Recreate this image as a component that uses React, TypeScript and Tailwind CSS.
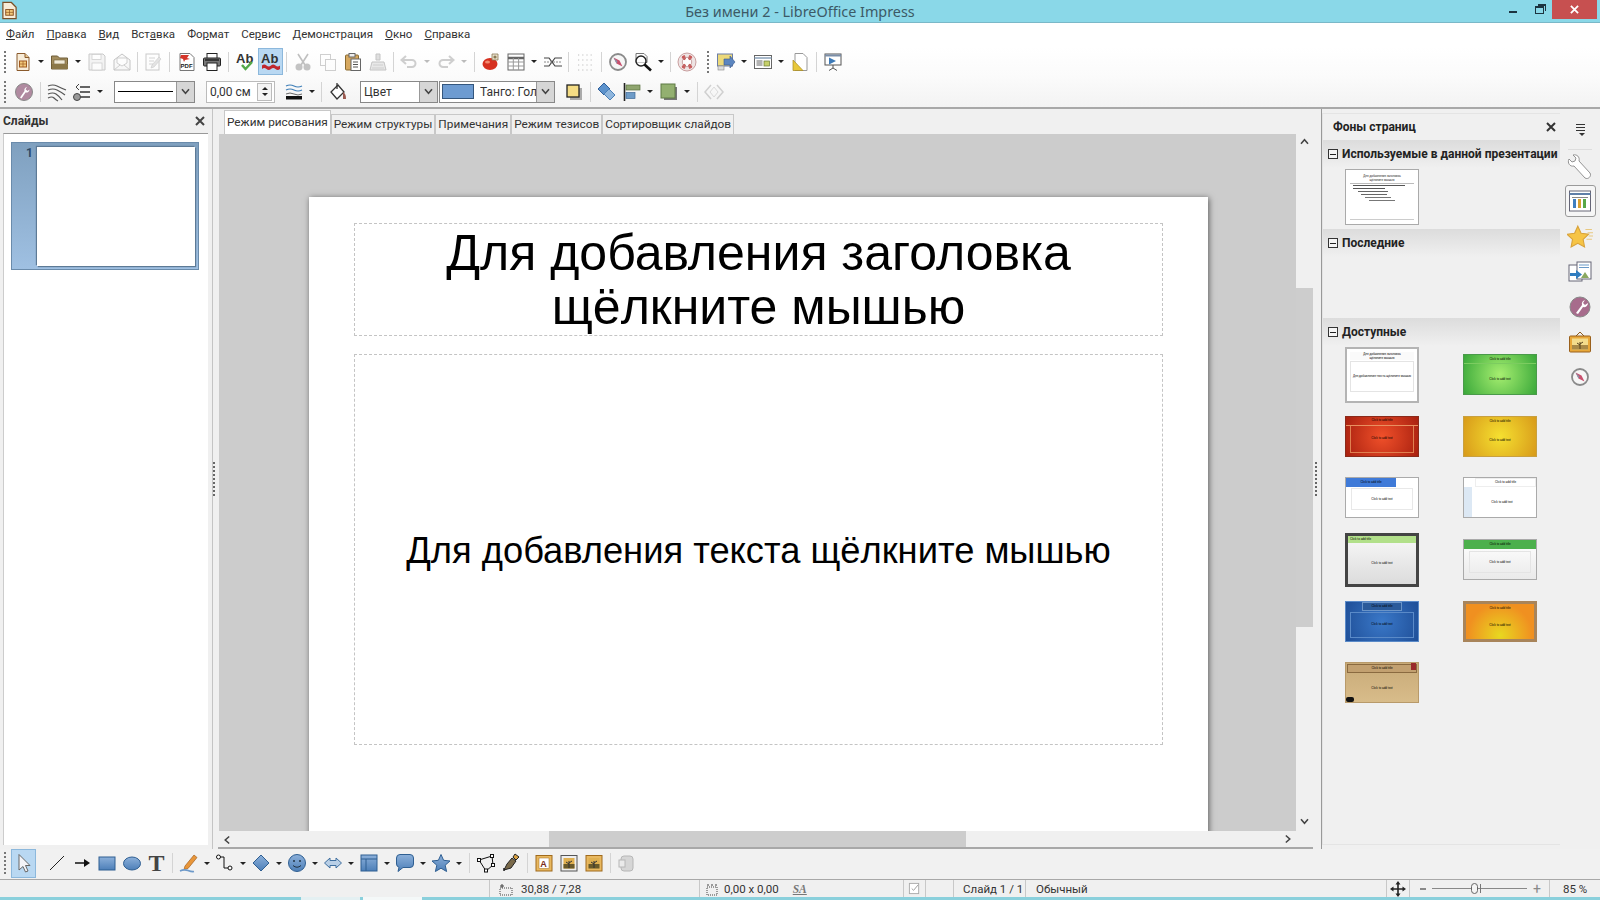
import type { ReactNode } from "react";
import clsx from "clsx";

const S = ({ children, off }: { children: ReactNode; off?: boolean }) => (
  <svg viewBox="0 0 20 20" className={clsx("w-5 h-5", off && "opacity-30")}>
    {children}
  </svg>
);

const Tool = ({ children, active, tall }: { children: ReactNode; active?: boolean; tall?: boolean }) => (
  <div
    className={clsx(
      "w-[25px] shrink-0 flex items-center justify-center",
      tall ? "h-[29px]" : "h-[27px]",
      active && "bg-[#b9d8f2] border border-[#8cb8dc]"
    )}
  >
    {children}
  </div>
);

const Drop = () => (
  <div className="w-[12px] shrink-0 flex items-center justify-center">
    <div className="w-0 h-0 border-x-[3px] border-x-transparent border-t-[3px] border-t-[#222]" />
  </div>
);

const DropOff = () => (
  <div className="w-[12px] shrink-0 flex items-center justify-center">
    <div className="w-0 h-0 border-x-[3px] border-x-transparent border-t-[3px] border-t-[#bbb]" />
  </div>
);

const Sep = ({ className = "w-[8px]" }: { className?: string }) => (
  <div className={clsx("shrink-0 h-[20px] flex justify-center", className)}>
    <div className="w-px h-full bg-[#d4d4d4]" />
  </div>
);

const Grip = ({ className = "" }: { className?: string }) => (
  <div className={clsx("shrink-0 w-[2px] h-[22px] border-l-2 border-dotted border-[#777]", className)} />
);

const Chevron = () => (
  <svg viewBox="0 0 10 8" className="w-[9px] h-[7px]">
    <path d="M1 1.5 5 6l4-4.5" fill="none" stroke="#444" strokeWidth="1.8" />
  </svg>
);

const SelectButton = () => (
  <div className="w-[18px] self-stretch shrink-0 bg-[#d6d6d6] border-l border-[#999] flex items-center justify-center">
    <Chevron />
  </div>
);

/* toolbar icons */
const DocNew = () => (
  <S>
    <path d="M4 1.5h8l4 4v13H4z" fill="#f7ecd8" stroke="#8a5a2c" />
    <path d="M12 1.5v4h4" fill="#e8c890" stroke="#8a5a2c" />
    <rect x="6.5" y="9" width="7" height="6" fill="#f2c97a" stroke="#a05a20" />
    <path d="M6.5 12h7M10 9v6" stroke="#a05a20" strokeWidth=".7" />
  </S>
);
const Folder = () => (
  <S>
    <path d="M1.5 4h6l2 2h8v11h-16z" fill="#a38d5e" stroke="#6f5d36" />
    <rect x="4" y="8" width="11" height="4" fill="#f0ead8" stroke="#6f5d36" strokeWidth=".6" />
    <rect x="2" y="12" width="16" height="5" fill="#8b7748" />
  </S>
);
const Floppy = () => (
  <S off>
    <path d="M2 2h14l2 2v14H2z" fill="#ddd" stroke="#555" />
    <rect x="5" y="2.5" width="9" height="5" fill="#fff" stroke="#555" strokeWidth=".7" />
    <rect x="5" y="11" width="10" height="7" fill="#fff" stroke="#555" strokeWidth=".7" />
  </S>
);
const Mail = () => (
  <S off>
    <path d="M2 8 10 2l8 6v10H2z" fill="#eee" stroke="#444" />
    <path d="M5 6h10v5l-5 3-5-3zM2 18l6-5M18 18l-6-5" fill="#fff" stroke="#444" strokeWidth=".8" />
  </S>
);
const EditDoc = () => (
  <S off>
    <rect x="3" y="2" width="13" height="16" fill="#fff" stroke="#555" />
    <path d="M6 6h6M6 9h5M6 12h4" stroke="#777" />
    <path d="m9 13 7-8 2 2-7 8-3 1z" fill="#aaa" stroke="#555" strokeWidth=".6" />
  </S>
);
const Pdf = () => (
  <S>
    <path d="M3 1.5h10l4 4v13H3z" fill="#fff" stroke="#777" />
    <path d="M4 3h8l-2 3 3 1-5 1-1 2-1-3-3-1z" fill="#d4352a" />
    <text x="3.6" y="16" fontSize="6" fontWeight="700" fontFamily="Liberation Sans" fill="#222">PDF</text>
  </S>
);
const Printer = () => (
  <S>
    <rect x="5" y="1.5" width="10" height="5" fill="#fff" stroke="#222" />
    <rect x="1.5" y="6" width="17" height="8" rx="1" fill="#777" stroke="#222" />
    <rect x="5" y="11" width="10" height="7.5" fill="#fff" stroke="#222" />
    <path d="M3 8h14" stroke="#222" strokeWidth="1.5" />
  </S>
);
const Spell = ({ auto }: { auto?: boolean }) => (
  <S>
    <text x="0" y="11" fontSize="13" fontWeight="700" fontFamily="Liberation Sans" fill="#333">Ab</text>
    {auto ? (
      <path d="M1 13.5q2.2-2 4.5 0t4.5 0 4.5 0 4.5 0v3.5q-2.2 2-4.5 0t-4.5 0-4.5 0-4.5 0z" fill="#c0272d" />
    ) : (
      <path d="m6 13 3.500 4L16 10" fill="none" stroke="#54a848" strokeWidth="2.5" />
    )}
  </S>
);
const Cut = () => (
  <S off>
    <path d="M5 2l7 11M15 2 8 13" stroke="#333" strokeWidth="1.6" />
    <circle cx="6" cy="15" r="3.5" fill="#444" />
    <circle cx="14" cy="15" r="3.5" fill="#444" />
  </S>
);
const Copy = () => (
  <S off>
    <rect x="2.5" y="2.5" width="10" height="11" fill="#fff" stroke="#666" />
    <rect x="7.5" y="7.5" width="10" height="11" fill="#fff" stroke="#666" />
  </S>
);
const Paste = () => (
  <S>
    <rect x="2.5" y="3" width="13" height="15" rx="1" fill="#d6a860" stroke="#8a6a30" />
    <rect x="6" y="1.5" width="6" height="3.5" fill="#eee" stroke="#666" />
    <rect x="8" y="7" width="9.5" height="11.5" fill="#fff" stroke="#666" />
    <path d="M10 10h5M10 12.5h5M10 15h5" stroke="#555" />
  </S>
);
const Brush = () => (
  <S off>
    <path d="M8 2h4v6H8z" fill="#999" stroke="#444" />
    <path d="M4 10h12l2 8H2z" fill="#bbb" stroke="#444" />
    <path d="M5 13h10M4 16h12" stroke="#666" />
  </S>
);
const Undo = ({ flip }: { flip?: boolean }) => (
  <S off>
    <g transform={flip ? "matrix(-1 0 0 1 20 0)" : undefined}>
      <path d="M3 8h10a3.5 3.5 0 0 1 0 7H8" fill="none" stroke="#666" strokeWidth="2" />
      <path d="M7 4 2.5 8 7 12" fill="none" stroke="#666" strokeWidth="2" />
    </g>
  </S>
);
const GalleryBall = () => (
  <S>
    <ellipse cx="9" cy="12" rx="7.5" ry="6" fill="#d6301f" />
    <ellipse cx="6.5" cy="10" rx="2.5" ry="1.5" fill="#f28a70" />
    <path d="M11 2h6v6h-6z" fill="#e8e0cc" stroke="#8a7a55" strokeWidth=".8" />
    <circle cx="14" cy="5" r="1.6" fill="#8a7a55" />
  </S>
);
const TableIcon = () => (
  <S>
    <rect x="2" y="2" width="16" height="16" fill="#fff" stroke="#666" />
    <path d="M2 6h16" stroke="#666" strokeWidth="2.5" />
    <path d="M2 10h16M2 14h16M7.300 6v12M12.600 6v12" stroke="#999" />
  </S>
);
const Connect = () => (
  <S>
    <path d="M1 6h5l3 4 3-4h7M1 14h5l3-4 3 4h7" fill="none" stroke="#444" strokeWidth="1.2" />
    <path d="M1 10h18" stroke="#888" strokeDasharray="2 1" />
  </S>
);
const Dots = () => (
  <S off>
    <path d="M3 3h14M3 8h14M3 13h14M3 18h14" stroke="#333" strokeWidth="1.2" strokeDasharray="1.2 3" />
  </S>
);
const Compass = () => (
  <S>
    <circle cx="10" cy="10" r="8" fill="#f6f6f6" stroke="#8a8a8a" strokeWidth="1.8" />
    <path d="m5.5 5.5 6 3 3 6-6-3z" fill="#c8506e" />
    <path d="m5.5 5.5 3 6 1-2z" fill="#8a92a8" />
  </S>
);
const Zoom = () => (
  <S>
    <path d="M3 1.5h8l3 3v6H3z" fill="#fff" stroke="#777" />
    <circle cx="8" cy="9" r="5" fill="#fff" fillOpacity=".6" stroke="#222" strokeWidth="1.4" />
    <path d="m11.5 12.5 6.5 6" stroke="#111" strokeWidth="2.6" />
  </S>
);
const Lifebuoy = () => (
  <S>
    <circle cx="10" cy="10" r="7" fill="none" stroke="#eee4e4" strokeWidth="4.5" />
    <path d="M5 5a7 7 0 0 1 2.5-1.400l1 3.300-1.500 1zM15 5a7 7 0 0 0-2.500-1.400l-1 3.300 1.500 1zM5 15a7 7 0 0 0 2.500 1.400l1-3.300-1.500-1zM15 15a7 7 0 0 1-2.500 1.400l-1-3.300 1.500-1z" fill="#c85a5a" stroke="#c85a5a" />
    <circle cx="10" cy="10" r="9" fill="none" stroke="#b88080" strokeWidth=".7" />
    <circle cx="10" cy="10" r="4.7" fill="none" stroke="#b88080" strokeWidth=".7" />
  </S>
);
const SlideAdd = () => (
  <S>
    <rect x="1.5" y="2" width="15" height="12" fill="#ecd97a" stroke="#6b7da8" />
    <path d="M8 7h6V4l5 6-5 6v-3H8z" fill="#5c86c0" stroke="#39598a" strokeWidth=".6" />
    <rect x="2" y="14" width="6" height="4" fill="#ddd" stroke="#888" strokeWidth=".6" />
  </S>
);
const Layout = () => (
  <S>
    <rect x="1.5" y="3.5" width="17" height="13" fill="#fff" stroke="#666" />
    <path d="M1.5 6h17" stroke="#8aa0b8" strokeWidth="1.5" />
    <path d="M3.5 9h6M3.5 11h6M3.5 13h6" stroke="#666" />
    <rect x="11" y="9" width="5.5" height="5" fill="#c6d06a" stroke="#6a7a30" strokeWidth=".7" />
  </S>
);
const DocShape = () => (
  <S>
    <path d="M5 1.5h8l4 4v13H5z" fill="#fff" stroke="#999" />
    <path d="M3 18.5V8l10 10.500z" fill="#e8c83a" stroke="#a88a20" strokeWidth=".7" />
  </S>
);
const Present = () => (
  <S>
    <rect x="2" y="2" width="16" height="11" fill="#fff" stroke="#555" />
    <path d="M2 3.5h16" stroke="#7b8ea8" strokeWidth="2" />
    <path d="M6 5.5 13 9l-7 3.500z" fill="#3d7ab8" />
    <path d="M10 13v3M6 18.5l4-2.500 4 2.500" stroke="#555" fill="none" />
  </S>
);
const Wizard = () => (
  <S>
    <circle cx="10" cy="10" r="8.5" fill="#b08aa0" stroke="#888" />
    <path d="M6 15.5 10.500 9a3 3 0 0 1 2.500-4l-1.500 2.200L13.500 9l2-1.500a3.200 3.200 0 0 1-4 3L7.500 16.500z" fill="#fff" />
  </S>
);
const Wavy = () => (
  <S>
    <path d="M1 4q5-2 9 0t9 4M1 8q5-2 9 0t8 5M1 12q5-2 8 0t6 6M1 16q4-2 6 0t4 3" fill="none" stroke="#555" strokeWidth="1.2" />
  </S>
);
const Tabs = () => (
  <S>
    <path d="M8 5h10M8 10h10M8 15h10" stroke="#333" strokeWidth="1.5" />
    <circle cx="5" cy="15" r="3.5" fill="#999" stroke="#444" />
    <path d="m7 2-3 3 3 3" fill="none" stroke="#444" />
  </S>
);
const LineColor = () => (
  <S>
    <path d="M2 4q4-2 8 0t8 0M2 8q4-2 8 0t8 0" fill="none" stroke="#3f7fb8" strokeWidth="1.2" />
    <path d="M2 12q4-2 8 0t8 0" fill="none" stroke="#666" />
    <rect x="2" y="14" width="16" height="3.5" fill="#111" />
  </S>
);
const Bucket = () => (
  <S>
    <path d="M10 3 3 10l6 7 7-7z" fill="#fff" stroke="#333" strokeWidth="1.3" />
    <path d="M9 1v6" stroke="#333" strokeWidth="1.3" />
    <path d="M15 10c2 1 3 3 3 7h-3z" fill="#9a5a50" />
  </S>
);
const ShadowBox = () => (
  <S>
    <rect x="6" y="6" width="12" height="12" fill="#aaa" />
    <rect x="3" y="3" width="12" height="12" fill="#f4dc84" stroke="#222" strokeWidth="1.3" />
  </S>
);
const Rotate = () => (
  <S>
    <path d="m1 7 6-6 6 6-6 6z" fill="#5c92cc" stroke="#2f5f9a" />
    <path d="m7 12 5-5 6 6-5 5z" fill="#8fb6dd" stroke="#4a80b8" />
  </S>
);
const Align = () => (
  <S>
    <path d="M2.5 1v18" stroke="#222" strokeWidth="1.6" />
    <rect x="4" y="3" width="14" height="5" fill="#8fa56f" stroke="#5a7040" strokeWidth=".7" />
    <rect x="4" y="10.5" width="9" height="6" fill="#6e9cc8" stroke="#3f6a98" strokeWidth=".7" />
  </S>
);
const Arrange = () => (
  <S>
    <rect x="5" y="5" width="13" height="13" fill="#777" />
    <rect x="2" y="2" width="14" height="14" fill="#93b070" stroke="#5f7a45" />
  </S>
);
const Diamonds = () => (
  <S off>
    <path d="m7 3-6 7 6 7M13 3l6 7-6 7" fill="none" stroke="#777" strokeWidth="1.5" />
    <path d="m10 5-4 5 4 5 4-5z" fill="none" stroke="#999" />
  </S>
);
const Cursor = () => (
  <S>
    <path d="M5 1.5V17l4-3.500 2.500 5.500 2.500-1-2.500-5.500H16z" fill="#f4f4f8" stroke="#666" />
  </S>
);
const LineTool = () => (
  <S>
    <path d="m3 17 14-14" stroke="#222" />
  </S>
);
const ArrowTool = () => (
  <S>
    <path d="M3 10h10" stroke="#111" strokeWidth="1.5" />
    <path d="m12 6 6 4-6 4z" fill="#111" />
  </S>
);
const RectTool = () => (
  <S>
    <defs>
      <linearGradient id="blue" x1="0" y1="0" x2="0" y2="1">
        <stop offset="0" stopColor="#8cb0da" />
        <stop offset="1" stopColor="#4d7fb8" />
      </linearGradient>
    </defs>
    <rect x="2" y="4" width="16" height="13" fill="url(#blue)" stroke="#2f5f92" />
  </S>
);
const EllipseTool = () => (
  <S>
    <ellipse cx="10" cy="10.5" rx="8.5" ry="6.5" fill="url(#blue)" stroke="#2f5f92" />
  </S>
);
const TextTool = () => (
  <div className="text-[24px] leading-none font-bold text-[#444] font-['Liberation_Serif',serif]">T</div>
);
const Pen = () => (
  <S>
    <path d="m6 13 9-11 3 2.500-9 11-4 1z" fill="#e8963a" stroke="#a5601c" strokeWidth=".7" />
    <path d="M1 18q4-2 8-.5t6 1" fill="none" stroke="#6d99c9" strokeWidth="1.6" />
  </S>
);
const Connector = () => (
  <S>
    <path d="M4 4h5v11h4" fill="none" stroke="#111" />
    <circle cx="3.5" cy="4" r="2" fill="#fff" stroke="#111" />
    <circle cx="15" cy="15" r="2" fill="#fff" stroke="#111" />
  </S>
);
const Diamond = () => (
  <S>
    <path d="m10 2 8 8-8 8-8-8z" fill="url(#blue)" stroke="#2f5f92" />
  </S>
);
const Smiley = () => (
  <S>
    <circle cx="10" cy="10" r="8.5" fill="url(#blue)" stroke="#2f5f92" />
    <circle cx="7" cy="8" r="1" fill="#234" />
    <circle cx="13" cy="8" r="1" fill="#234" />
    <path d="M6 12.5q4 3.500 8 0" fill="none" stroke="#234" />
  </S>
);
const DoubleArrow = () => (
  <S>
    <path d="M1.5 10 7 5v2.500h6V5l5.500 5-5.500 5v-2.500H7V15z" fill="#b9cfe6" stroke="#3f6f9f" />
  </S>
);
const Flow = () => (
  <S>
    <rect x="2" y="2" width="16" height="16" fill="url(#blue)" stroke="#2f5f92" />
    <path d="M2 6h16M7 6v12" stroke="#2f5f92" />
  </S>
);
const Callout = () => (
  <S>
    <path d="M5 1.5h10a3.500 3.500 0 0 1 3.500 3.500v6a3.500 3.500 0 0 1-3.500 3.500H8l-5 4 1-4.200A3.500 3.500 0 0 1 1.500 11V5A3.500 3.500 0 0 1 5 1.500z" fill="url(#blue)" stroke="#2f5f92" />
  </S>
);
const Star = () => (
  <S>
    <path d="m10 1.5 2.600 5.800 6.400.7-4.800 4.200 1.400 6.300-5.600-3.300-5.600 3.300 1.400-6.300L1 8l6.400-.7z" fill="url(#blue)" stroke="#2f5f92" />
  </S>
);
const Points = () => (
  <S>
    <path d="m3 7 13-4 1 9-7 6z" fill="none" stroke="#111" />
    <rect x="1.5" y="5.5" width="3" height="3" fill="#fff" stroke="#111" />
    <rect x="14.5" y="1.5" width="3" height="3" fill="#fff" stroke="#111" />
    <rect x="15.5" y="10.5" width="3" height="3" fill="#fff" stroke="#111" />
    <rect x="8.5" y="16" width="3" height="3" fill="#fff" stroke="#111" />
  </S>
);
const Glue = () => (
  <S>
    <path d="m3 17 3-6 5-6 4 3-5 7z" fill="#7a6a4a" stroke="#222" />
    <path d="m12 4 2-3 4 3-3 3z" fill="#d8a040" stroke="#222" />
    <path d="M3 18v-3" stroke="#222" strokeWidth="1.5" />
  </S>
);
const FrameText = () => (
  <S>
    <rect x="2" y="2.5" width="16" height="15.5" fill="#e8b860" stroke="#a06a1c" />
    <rect x="5" y="5" width="10" height="10.5" fill="#fff" stroke="#a06a1c" strokeWidth=".5" />
    <text x="6.2" y="13.5" fontSize="9" fontWeight="700" fontFamily="Liberation Sans" fill="#7a2a20">A</text>
  </S>
);
const FramePic = ({ gold }: { gold?: boolean }) => (
  <S>
    <rect x="2" y="2.5" width="16" height="15.5" fill={gold ? "#e8b860" : "#eee"} stroke={gold ? "#a06a1c" : "#555"} />
    <rect x="4.5" y="5" width="11" height="10.5" fill="#e0b050" />
    <path d="M4.5 11h11v4.500h-11z" fill="#6a5a2a" />
    <path d="M10 15V8m0 3-3-2m3 1 3-2" stroke="#333" />
  </S>
);
const Shape3d = () => (
  <S off>
    <rect x="4" y="3" width="12" height="15" rx="3" fill="#999" stroke="#333" />
    <rect x="2" y="7" width="6" height="7" fill="#ddd" stroke="#333" />
  </S>
);
const MoveIcon = () => (
  <S>
    <path d="M10 2 7.500 5.500h1.700v3.700H5.500V7.500L2 10l3.500 2.500v-1.700h3.700v3.700H7.500L10 18l2.500-3.500h-1.700v-3.700h3.700v1.700L18 10l-3.500-2.500v1.700h-3.700V5.500h1.700z" fill="#222" />
  </S>
);

/* right deck icons */
const Wrench = () => (
  <svg viewBox="0 0 28 28" className="w-7 h-7">
    <path d="M3 5l3 3 3-1 1-3-3-3c4-1 7 2 6 6l11 12c2 3-2 7-5 5L8 12C4 13 1 9 3 5z" fill="#fff" stroke="#888" strokeWidth=".9" />
  </svg>
);
const Deck = () => (
  <svg viewBox="0 0 24 24" className="w-6 h-6">
    <rect x="1.5" y="2" width="21" height="20" fill="#fff" stroke="#667" />
    <path d="M1.5 5h21" stroke="#5f7fa8" strokeWidth="2" />
    <path d="M4 8.5h16" stroke="#888" />
    <rect x="5" y="10" width="3" height="9" fill="#3f7fc0" />
    <rect x="10" y="10" width="3" height="9" fill="#d8a030" />
    <rect x="15" y="10" width="3" height="9" fill="#58a848" />
  </svg>
);
const GoldStar = () => (
  <svg viewBox="0 0 24 24" className="w-[26px] h-[26px]">
    <path d="m10 2 3 6.500 7 .9-5.100 4.800 1.300 7-6.200-3.400-6.200 3.400 1.300-7L0 9.400l7-.9z" fill="#f6c445" stroke="#d8a23a" />
    <path d="M17 5h6M19 8h5M20 11h4M18 14h5" stroke="#e8c880" />
  </svg>
);
const Transition = () => (
  <svg viewBox="0 0 24 24" className="w-6 h-6">
    <rect x="1" y="5" width="13" height="16" fill="#fff" stroke="#667" />
    <rect x="9" y="2" width="14" height="17" fill="#fff" stroke="#667" />
    <path d="M11 5h10M11 7.500h10" stroke="#6a9ac8" />
    <path d="M13 18l4-6 4 6z" fill="#8aa860" />
    <path d="M2 13h6v-3l6 4.500L8 19v-3H2z" fill="#2f7cc0" />
  </svg>
);
const PurpleWrench = () => (
  <svg viewBox="0 0 24 24" className="w-6 h-6">
    <circle cx="12" cy="12" r="10" fill="#a76c8c" stroke="#888" />
    <path d="M8 18 14 10a4 4 0 0 1 3-5l-2 3 2 2 3-2a4 4 0 0 1-5 4l-5 7z" fill="#fff" />
  </svg>
);
const FrameBig = () => (
  <svg viewBox="0 0 24 24" className="w-6 h-6">
    <path d="M8 6 12 2l4 4" fill="none" stroke="#8a5a1c" />
    <rect x="1.5" y="6" width="21" height="16" rx="1" fill="#e8a83a" stroke="#9a601c" />
    <rect x="4" y="8.5" width="16" height="11" fill="#f3dc8c" />
    <path d="M4 15h16v4.500H4z" fill="#a88a48" />
    <path d="M12 19v-7m0 3-3-2m3 1 3-2" stroke="#54401c" />
  </svg>
);

/* master page thumbnails */
const ClickLabel = ({ children = "Click to add title", className = "" }: { children?: string; className?: string }) => (
  <span className={clsx("text-[3px] leading-none text-black whitespace-nowrap font-['Liberation_Sans',sans-serif]", className)}>{children}</span>
);

const MasterBlank = () => (
  <div className="w-[74px] h-[56px] bg-white border-2 border-[#b4b4b4] flex flex-col items-center p-[3px] font-['Liberation_Sans',sans-serif]">
    <div className="w-full text-[3px] leading-[4px] text-center text-black bg-[#fafafa]">
      Для добавления заголовка
      <br />
      щёлкните мышью
    </div>
    <div className="mt-[1px] w-full h-[31px] border border-[#e4e4e4] flex items-center justify-center">
      <span className="text-[3px] leading-none text-black">Для добавления текста щёлкните мышью</span>
    </div>
  </div>
);

const MasterUsed = () => (
  <div className="w-[74px] h-[56px] bg-white border border-[#aaa] flex flex-col items-center p-[4px] font-['Liberation_Sans',sans-serif]">
    <div className="text-[3px] leading-[4px] text-center text-[#222]">
      Для добавления заголовка
      <br />
      щёлкните мышью
    </div>
    <div className="w-full flex-1 mt-[1px] border-t border-[#bbb] flex flex-col gap-[2px] pt-[1px] pl-[3px]">
      <div className="h-px w-[52px] bg-[#555]" />
      <div className="h-px w-[32px] bg-[#555]" />
      <div className="h-px w-[30px] ml-[5px] bg-[#666]" />
      <div className="h-px w-[26px] ml-[8px] bg-[#666]" />
      <div className="h-px w-[26px] ml-[12px] bg-[#777]" />
      <div className="h-px w-[26px] ml-[16px] bg-[#777]" />
    </div>
    <div className="h-px w-full bg-[#ccc]" />
  </div>
);

const Master = ({ bg, head, inner, border, title }: { bg: string; head?: string; inner?: string; border?: string; title?: string }) => (
  <div className={clsx("relative w-[74px] h-[41px] flex flex-col border overflow-hidden", bg, border ?? "border-[#aaa]")}>
    <div className={clsx("h-[9px] flex items-center justify-center shrink-0", head)}>
      <ClickLabel className={title} />
    </div>
    <div className={clsx("flex-1 flex items-center justify-center", inner)}>
      <ClickLabel>Click to add text</ClickLabel>
    </div>
  </div>
);

const Section = ({ title, children, className = "" }: { title: string; children?: ReactNode; className?: string }) => (
  <div className={className}>
    <div className="h-[28px] shrink-0 bg-gradient-to-b from-[#dcdcdc] to-[#f0f0f0] flex items-center pl-[5px] gap-[4px]">
      <div className="w-[10px] h-[10px] border border-[#333] bg-[#f4f4f4] flex items-center justify-center shrink-0">
        <div className="w-[6px] h-px bg-[#222]" />
      </div>
      <span className="text-[12px] font-bold text-[#222] whitespace-nowrap">{title}</span>
    </div>
    {children}
  </div>
);

const menu: [string, string, string][] = [
  ["", "Ф", "айл"],
  ["", "П", "равка"],
  ["", "В", "ид"],
  ["Вст", "а", "вка"],
  ["Фо", "р", "мат"],
  ["Се", "р", "вис"],
  ["", "Д", "емонстрация"],
  ["", "О", "кно"],
  ["", "С", "правка"],
];

const tabs = ["Режим рисования", "Режим структуры", "Примечания", "Режим тезисов", "Сортировщик слайдов"];

const StatusCell = ({ className, children }: { className: string; children?: ReactNode }) => (
  <div className={clsx("h-full shrink-0 flex items-center border-r border-[#c8c8c8] whitespace-nowrap", className)}>{children}</div>
);

export default function App() {
  return (
    <div className="w-[1600px] h-[900px] flex flex-col overflow-hidden bg-[#f0f0f0] text-[#222] font-['Roboto','Liberation_Sans',sans-serif]">
      {/* Title bar */}
      <div className="h-[23px] shrink-0 bg-[#8ad8e8] border-b border-[#7ab8c8] grid grid-cols-[1fr_auto_1fr] items-start">
        <div className="pl-[1px] pt-[1px]">
          <svg viewBox="0 0 18 20" className="w-[17px] h-[19px]">
            <path d="M2 1.5h9l5 5v12H2z" fill="#f7ecd8" stroke="#7a5028" strokeWidth="1.3" />
            <rect x="5" y="9" width="8" height="6" fill="#f2c97a" stroke="#8a5020" />
            <path d="M5 12h8M9 9v6" stroke="#8a5020" strokeWidth=".7" />
          </svg>
        </div>
        <div className="text-[14.4px] leading-[23px] text-[#3c5a66] font-['Noto_Sans',sans-serif]">Без имени 2 - LibreOffice Impress</div>
        <div className="flex justify-end pr-[3px]">
          <div className="w-[26px] h-[19px] flex items-center justify-center">
            <div className="w-[8px] h-[2px] mt-[5px] bg-[#1c3440]" />
          </div>
          <div className="w-[26px] h-[19px] flex items-center justify-center">
            <div className="relative w-[9px] h-[8px] border border-t-2 border-[#1c3440] mt-[1px]">
              <div className="absolute -top-[4px] left-[2px] w-[8px] h-[7px] border border-t-2 border-[#1c3440] border-l-0 border-b-0" />
            </div>
          </div>
          <div className="w-[45px] h-[19px] bg-[#c75050] flex items-center justify-center text-white">
            <svg viewBox="0 0 10 10" className="w-[9px] h-[9px]">
              <path d="m1 1 8 8M9 1 1 9" stroke="#fff" strokeWidth="2" />
            </svg>
          </div>
        </div>
      </div>

      {/* Menu bar */}
      <div className="h-[24px] shrink-0 bg-white flex items-center pl-[6px] gap-[12px] text-[11.5px] text-[#333]">
        {menu.map(([a, b, c]) => (
          <span key={b + c}>
            {a}
            <u>{b}</u>
            {c}
          </span>
        ))}
      </div>

      {/* Standard toolbar */}
      <div className="h-[29px] shrink-0 bg-gradient-to-b from-white to-[#fbfbfb] flex items-center pl-[4px]">
        <Grip className="mr-[4px]" />
        <Tool><DocNew /></Tool>
        <Drop />
        <Tool><Folder /></Tool>
        <Drop />
        <Tool><Floppy /></Tool>
        <Tool><Mail /></Tool>
        <Sep className="w-[6px]" />
        <Tool><EditDoc /></Tool>
        <Sep className="w-[9px]" />
        <Tool><Pdf /></Tool>
        <Tool><Printer /></Tool>
        <Sep className="w-[9px]" />
        <Tool><Spell /></Tool>
        <Tool active><Spell auto /></Tool>
        <Sep className="w-[7px]" />
        <Tool><Cut /></Tool>
        <Tool><Copy /></Tool>
        <Tool><Paste /></Tool>
        <Tool><Brush /></Tool>
        <Sep className="w-[6px]" />
        <Tool><Undo /></Tool>
        <DropOff />
        <Tool><Undo flip /></Tool>
        <DropOff />
        <Sep className="w-[8px]" />
        <Tool><GalleryBall /></Tool>
        <Tool><TableIcon /></Tool>
        <Drop />
        <Tool><Connect /></Tool>
        <Sep className="w-[7px]" />
        <Tool><Dots /></Tool>
        <Sep className="w-[8px]" />
        <Tool><Compass /></Tool>
        <Tool><Zoom /></Tool>
        <Drop />
        <Sep className="w-[7px]" />
        <Tool><Lifebuoy /></Tool>
        <Grip className="ml-[8px] mr-[4px]" />
        <Tool><SlideAdd /></Tool>
        <Drop />
        <Tool><Layout /></Tool>
        <Drop />
        <Tool><DocShape /></Tool>
        <Sep className="w-[8px]" />
        <Tool><Present /></Tool>
      </div>

      {/* Line and filling toolbar */}
      <div className="h-[33px] shrink-0 bg-gradient-to-b from-[#fbfbfb] to-[#f3f3f3] border-b-2 border-[#a8a8a8] flex items-center pl-[4px]">
        <Grip className="mr-[5px]" />
        <Tool><Wizard /></Tool>
        <Sep className="w-[8px]" />
        <Tool><Wavy /></Tool>
        <Tool><Tabs /></Tool>
        <Drop />
        <div className="w-[81px] h-[22px] ml-[8px] shrink-0 bg-white border border-[#888] flex items-center">
          <div className="flex-1 mx-[3px] h-px bg-black" />
          <SelectButton />
        </div>
        <div className="w-[69px] h-[22px] ml-[11px] shrink-0 bg-white border border-[#bbb] flex items-center pl-[3px] text-[12px] text-[#333]">
          <span className="flex-1">0,00 см</span>
          <div className="w-[15px] h-[18px] mr-[2px] border border-[#bbb] bg-[#f4f4f4] flex flex-col items-center justify-center gap-[3px]">
            <div className="w-0 h-0 border-x-[3px] border-x-transparent border-b-[3px] border-b-[#222]" />
            <div className="w-0 h-0 border-x-[3px] border-x-transparent border-t-[3px] border-t-[#222]" />
          </div>
        </div>
        <div className="w-[6px] shrink-0" />
        <Tool><LineColor /></Tool>
        <Drop />
        <Sep className="w-[7px]" />
        <Tool><Bucket /></Tool>
        <div className="w-[78px] h-[22px] ml-[10px] shrink-0 bg-white border border-[#888] flex items-center pl-[3px] text-[12px] text-[#333]">
          <span className="flex-1">Цвет</span>
          <SelectButton />
        </div>
        <div className="w-[116px] h-[22px] ml-[1px] shrink-0 bg-white border border-[#888] flex items-center pl-[2px] text-[12px] text-[#333] overflow-hidden">
          <div className="w-[32px] h-[15px] shrink-0 bg-[#6d9bd1] border border-[#34567d]" />
          <span className="ml-[6px] flex-1 overflow-hidden whitespace-nowrap">Танго: Голуб</span>
          <SelectButton />
        </div>
        <div className="w-[6px] shrink-0" />
        <Tool><ShadowBox /></Tool>
        <Sep className="w-[8px]" />
        <Tool><Rotate /></Tool>
        <Tool><Align /></Tool>
        <Drop />
        <Tool><Arrange /></Tool>
        <Drop />
        <Sep className="w-[8px]" />
        <Tool><Diamonds /></Tool>
      </div>

      {/* Work area */}
      <div className="flex-1 min-h-0 flex">
        {/* Slide pane */}
        <div className="w-[212px] shrink-0 flex flex-col pb-[4px] pl-[3px] pr-[4px]">
          <div className="h-[24px] shrink-0 flex items-center justify-between pr-[3px] text-[12px] font-bold text-[#333]">
            <span>Слайды</span>
            <svg viewBox="0 0 10 10" className="w-[10px] h-[10px]">
              <path d="m1 1 8 8M9 1 1 9" stroke="#444" strokeWidth="2" />
            </svg>
          </div>
          <div className="flex-1 bg-white border-t border-[#999] border-l border-l-[#ccc] pt-[8px] pl-[7px]">
            <div className="w-[188px] h-[128px] bg-gradient-to-b from-[#7fa0bf] to-[#9fc0e2] border border-[#6a8bab] flex pl-[25px] pt-[4px] relative">
              <span className="absolute top-[1px] left-[14px] text-[12px] font-bold text-[#2c4a66]">1</span>
              <div className="w-[158px] h-[119px] bg-white shadow-[-1px_-1px_1px_#5d7a96,1px_1px_1px_#5d7a96]" />
            </div>
          </div>
        </div>

        {/* Left sash */}
        <div className="w-[6px] shrink-0 flex items-center border-l border-[#c4c4c4]">
          <div className="w-[2px] h-[34px] border-l-2 border-dotted border-[#666]" />
        </div>

        {/* Document view */}
        <div className="w-[1095px] shrink-0 flex flex-col border-b-2 border-[#a8a8a8] pl-[1px]">
          <div className="h-[25px] shrink-0 flex items-end pl-[5px] text-[11.8px] text-[#333]">
            {tabs.map((t, i) => (
              <div
                key={t}
                className={clsx(
                  "px-[2px] border border-b-0 border-[#c8c8c8] whitespace-nowrap",
                  i === 0 ? "h-[24px] bg-white leading-[22px]" : "h-[20px] bg-[#f0f0f0] leading-[19px]"
                )}
              >
                {t}
              </div>
            ))}
          </div>
          <div className="flex-1 min-h-0 flex">
            <div className="flex-1 min-w-0 flex flex-col">
              <div className="flex-1 min-h-0 bg-[#cccccc] overflow-hidden pl-[90px] pt-[63px]">
                <div className="w-[899px] h-[674px] bg-white shadow-[1px_1px_6px_rgba(0,0,0,0.55)] pt-[26px] px-[45px] font-['Liberation_Sans',sans-serif] text-black">
                  <div className="h-[113px] border border-dashed border-[#c4c4c4] text-center text-[50px] leading-[54px] pt-[2px]">
                    Для добавления заголовка
                    <br />
                    щёлкните мышью
                  </div>
                  <div className="h-[391px] mt-[18px] pt-[3px] border border-dashed border-[#c4c4c4] flex items-center justify-center text-[36.3px]">
                    Для добавления текста щёлкните мышью
                  </div>
                </div>
              </div>
              <div className="h-[16px] shrink-0 flex items-center bg-[#f0f0f0]">
                <div className="w-[16px] flex justify-center rotate-90"><Chevron /></div>
                <div className="flex-1 h-full pl-[314px] pr-[314px]">
                  <div className="h-full bg-[#cdcdcd]" />
                </div>
                <div className="w-[16px] flex justify-center -rotate-90"><Chevron /></div>
              </div>
            </div>
            <div className="w-[17px] shrink-0 flex flex-col items-center bg-[#f0f0f0]">
              <div className="h-[16px] flex items-center rotate-180"><Chevron /></div>
              <div className="flex-1 w-full flex flex-col pt-[138px] pb-[186px]">
                <div className="flex-1 bg-[#cdcdcd]" />
              </div>
              <div className="h-[34px] pb-[18px] flex items-center"><Chevron /></div>
            </div>
          </div>
        </div>

        {/* Right sash */}
        <div className="w-[9px] shrink-0 flex items-center pl-[2px] border-r border-[#999]">
          <div className="w-[2px] h-[34px] border-l-2 border-dotted border-[#666]" />
        </div>

        {/* Master pages panel */}
        <div className="w-[238px] shrink-0 pt-[4px] pb-[4px] overflow-hidden">
          <div className="h-full border border-[#e4e4e4] border-r-0 flex flex-col overflow-hidden">
            <div className="h-[26px] shrink-0 bg-[#f0f0f0] flex items-center justify-between pl-[10px] pr-[4px] text-[12px] font-bold">
              <span>Фоны страниц</span>
              <svg viewBox="0 0 10 10" className="w-[10px] h-[10px]">
                <path d="m1 1 8 8M9 1 1 9" stroke="#333" strokeWidth="2" />
              </svg>
            </div>
            <Section title="Используемые в данной презентации" className="h-[89px] shrink-0">
              <div className="pl-[22px] pt-[1px]"><MasterUsed /></div>
            </Section>
            <Section title="Последние" className="h-[89px] shrink-0" />
            <Section title="Доступные">
              <div className="pl-[22px] -mt-[2px] grid grid-cols-[118px_74px] auto-rows-[61.6px] items-center">
                <MasterBlank />
                <Master bg="bg-[radial-gradient(circle,#a6ee70,#3aa83a)]" border="border-[#4a9a4a]" head="border-b border-[#7ccc60]" />
                <Master bg="bg-[radial-gradient(circle,#f0502a,#a8200f)]" border="border-[#8a2a1a]" head="border-b border-[#e89060]" inner="border border-t-0 border-[#e08050] mx-[4px] mb-[3px]" />
                <Master bg="bg-[radial-gradient(circle,#f5e030,#d89a1a)]" border="border-[#c8a040]" title="text-[#f8f0b0]" />
                <Master bg="bg-white" head="bg-[#3f7ad8] mr-[22px]" title="text-[#102040]" inner="border border-[#e8e8e8] mx-[5px] mt-[1px] mb-[7px]" />
                <Master bg="bg-white" head="border border-[#eee] ml-[11px]" inner="border-l-[8px] border-[#dce8f4] pr-[4px]" />
                <div className="w-[74px] h-[54px] bg-[#444] p-[3px]">
                  <div className="h-full bg-gradient-to-b from-[#f8f8f8] to-[#dcdcdc] flex flex-col">
                    <div className="h-[7px] bg-[#b2e08a] flex items-center pl-[2px]"><ClickLabel /></div>
                    <div className="flex-1 flex items-center justify-center"><ClickLabel>Click to add text</ClickLabel></div>
                  </div>
                </div>
                <Master bg="bg-gradient-to-b from-white to-[#eaeaea]" head="bg-[#4cb04c] h-[8px]" inner="border border-[#e4e4e4] mx-[5px] mt-[2px] mb-[6px]" />
                <Master bg="bg-[radial-gradient(circle,#3a78c8,#1f4f98)]" head="bg-[#2a5a9a] border border-[#6a94c8] mx-[16px]" border="border-[#5a8ac8]" inner="border border-[#5a8ac8] mx-[4px] mt-[1px] mb-[3px]" />
                <Master bg="bg-[radial-gradient(circle_at_50%_90%,#e8d820,#f09020_70%)]" border="border-[#a8845a] border-[3px]" />
                <div className="relative w-[74px]">
                  <Master bg="bg-gradient-to-b from-[#c8aa78] to-[#d8bc8a]" head="bg-[#c2a070] border border-[#8a6a40] m-[1px]" border="border-[#b89a6a]" />
                  <div className="absolute top-[1px] right-[3px] w-[5px] h-[7px] bg-[#9a2a2a]" />
                  <div className="absolute bottom-[1px] left-[1px] w-[8px] h-[5px] rounded-[2px] bg-[#111]" />
                </div>
              </div>
            </Section>
          </div>
        </div>

        {/* Deck tab bar */}
        <div className="w-[40px] shrink-0 flex flex-col items-center pt-[9px]">
          <div className="h-[24px] flex flex-col items-center justify-center gap-[2px]">
            <div className="w-[9px] h-px bg-[#333]" />
            <div className="w-[9px] h-px bg-[#333]" />
            <div className="w-[9px] h-px bg-[#333]" />
            <div className="w-0 h-0 ml-[4px] border-x-[3px] border-x-transparent border-t-[3px] border-t-[#333]" />
          </div>
          <div className="w-[24px] h-px bg-[#ddd] mt-[7px]" />
          <div className="h-[35px] flex items-center"><Wrench /></div>
          <div className="w-[31px] h-[32px] border border-[#9a9a9a] rounded-[3px] bg-[#f6f6f6] flex items-center justify-center"><Deck /></div>
          <div className="h-[35px] mt-[2px] flex items-center"><GoldStar /></div>
          <div className="h-[35px] flex items-center"><Transition /></div>
          <div className="h-[35px] flex items-center"><PurpleWrench /></div>
          <div className="h-[35px] flex items-center"><FrameBig /></div>
          <div className="h-[35px] flex items-center"><Compass /></div>
        </div>
      </div>

      {/* Drawing toolbar */}
      <div className="h-[31px] shrink-0 border-b border-[#a8a8a8] bg-[#f1f1f1] flex items-center pl-[4px] pb-[2px]">
        <Grip className="mr-[5px]" />
        <Tool active tall><Cursor /></Tool>
        <div className="w-[8px] shrink-0" />
        <Tool><LineTool /></Tool>
        <Tool><ArrowTool /></Tool>
        <Tool><RectTool /></Tool>
        <Tool><EllipseTool /></Tool>
        <Tool><TextTool /></Tool>
        <Sep className="w-[7px]" />
        <Tool><Pen /></Tool>
        <Drop />
        <div className="-ml-[1px]"><Tool><Connector /></Tool></div>
        <Drop />
        <div className="-ml-[1px]"><Tool><Diamond /></Tool></div>
        <Drop />
        <div className="-ml-[1px]"><Tool><Smiley /></Tool></div>
        <Drop />
        <div className="-ml-[1px]"><Tool><DoubleArrow /></Tool></div>
        <Drop />
        <div className="-ml-[1px]"><Tool><Flow /></Tool></div>
        <Drop />
        <div className="-ml-[1px]"><Tool><Callout /></Tool></div>
        <Drop />
        <div className="-ml-[1px]"><Tool><Star /></Tool></div>
        <Drop />
        <Sep className="w-[8px]" />
        <Tool><Points /></Tool>
        <Tool><Glue /></Tool>
        <Sep className="w-[8px]" />
        <Tool><FrameText /></Tool>
        <Tool><FramePic /></Tool>
        <Tool><FramePic gold /></Tool>
        <Sep className="w-[8px]" />
        <Tool><Shape3d /></Tool>
      </div>

      {/* Status bar */}
      <div className="h-[17px] shrink-0 bg-[#f0f0f0] flex items-center text-[11.5px] text-[#333]">
        <StatusCell className="w-[490px]" />
        <StatusCell className="w-[210px] pl-[7px] gap-[8px] pt-[2px]">
          <svg viewBox="0 0 16 12" className="w-[16px] h-[12px]">
            <path d="M5 0v4M3 2h4" stroke="#444" />
            <rect x="3" y="4" width="12" height="7" fill="none" stroke="#444" strokeDasharray="1 1" />
          </svg>
          <span>30,88 / 7,28</span>
        </StatusCell>
        <StatusCell className="w-[204px] pl-[5px] gap-[5px] pt-[2px]">
          <svg viewBox="0 0 14 12" className="w-[14px] h-[12px]">
            <rect x="2" y="3" width="10" height="8" fill="none" stroke="#444" strokeDasharray="1 1" />
            <path d="M2 1h2M6 1h2M10 1h2" stroke="#444" />
          </svg>
          <span>0,00 x 0,00</span>
          <span className="ml-[9px] italic font-bold text-[#777] underline font-['Liberation_Serif',serif]">SA</span>
        </StatusCell>
        <StatusCell className="w-[22px] justify-center">
          <svg viewBox="0 0 14 14" className="w-[13px] h-[13px]">
            <rect x="1.5" y="1.5" width="10" height="11" fill="#fff" stroke="#aaa" />
            <path d="m4 7 2 2 5-6" fill="none" stroke="#999" />
          </svg>
        </StatusCell>
        <StatusCell className="w-[28px]" />
        <StatusCell className="w-[72px] pl-[9px] pt-[2px]">Слайд 1 / 1</StatusCell>
        <StatusCell className="w-[361px] pl-[10px] pt-[2px]">Обычный</StatusCell>
        <StatusCell className="w-[23px] justify-center">
          <MoveIcon />
        </StatusCell>
        <StatusCell className="w-[140px] pl-[10px] gap-[6px] text-[#888]">
          <div className="w-[6px] h-[2px] bg-[#888]" />
          <div className="relative w-[95px] h-px bg-[#888] flex items-center">
            <div className="absolute left-[39px] w-[7px] h-[11px] rounded-full border border-[#666] bg-[#f4f4f4]" />
            <div className="absolute left-[48px] w-px h-[9px] bg-[#777]" />
          </div>
          <span className="text-[14px] leading-none">+</span>
        </StatusCell>
        <div className="pl-[13px] pt-[2px] whitespace-nowrap">85 %</div>
      </div>
      <div className="h-[3px] shrink-0 bg-[#8ad0dc] flex pl-[301px] gap-[3px]">
        <div className="w-[59px] h-full bg-[#e4f0f2]" />
        <div className="w-[59px] h-full bg-[#f4f8f8]" />
      </div>
    </div>
  );
}
